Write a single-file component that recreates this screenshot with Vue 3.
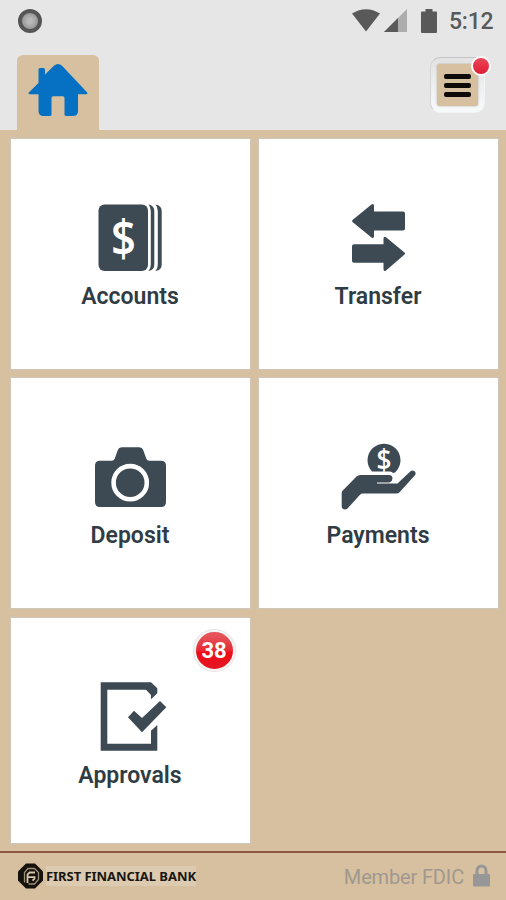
<template>
  <div class="screen">
    <header class="top">
      <div class="status-bar">
        <span class="record"></span>
        <div class="status-icons">
          <svg class="wifi" width="28" height="23" viewBox="0 0 28 23">
            <path d="M0 4.5Q14-4 28 4.5L14 22.5Z" fill="#595959" />
          </svg>
          <svg class="signal" width="23" height="23" viewBox="0 0 23 23">
            <path d="M23 0V23H0Z" fill="#adadad" />
            <path d="M14 9V23H0Z" fill="#595959" />
          </svg>
          <svg class="battery" width="16" height="24" viewBox="0 0 16 24">
            <path d="M4.500 0h7v2.500H15q1 0 1 1V23q0 1-1 1H1q-1 0-1-1V3.500q0-1 1-1h3.500z" fill="#595959" />
          </svg>
          <span class="clock">5:12</span>
        </div>
      </div>

      <div class="nav">
        <div class="home-tab">
          <svg width="60" height="54" viewBox="0 0 60 54">
            <path
              d="M.8 28.500 10.500 19V5.500q0-1.500 1.500-1.500h3.500Q17 4 17 5.500V10.500L26 1.700q4-3.400 8 0L59.200 28.500q.8 1.700-1.200 1.700h-8V47q0 5-5 5h-7q-1.500 0-1.500-1.500V34q0-1.800-1.800-1.800h-9.400q-1.800 0-1.800 1.800v16.500q0 1.500-1.500 1.500H15.500q-5 0-5-5V30.200H2q-2 0-1.200-1.700z"
              fill="#0670c2"
            />
          </svg>
        </div>
        <button class="menu-btn" @click="menuOpen = !menuOpen">
          <span class="menu-face">
            <span class="bar"></span>
            <span class="bar"></span>
            <span class="bar"></span>
          </span>
          <span class="dot"></span>
        </button>
      </div>
    </header>

    <main class="tiles">
      <div v-for="item in items" :key="item.name" class="tile">
        <svg v-if="item.icon === 'accounts'" class="icon" viewBox="0 0 90 80">
          <rect x="13.500" y="6.500" width="49.500" height="66.500" rx="6" />
          <path d="M63.500 6.500q5.800 1 5.800 6.500v53.500q0 5.500-5.800 6.500q2.300-2.500 2.300-6.500V13q0-4-2.300-6.500z" />
          <path d="M70.500 6.500q6.200 1 6.200 6.500v53.500q0 5.500-6.200 6.500q2.300-2.500 2.300-6.500V13q0-4-2.300-6.500z" />
          <text class="dollar" x="38.500" y="58" font-size="51" textLength="25" lengthAdjust="spacingAndGlyphs">$</text>
        </svg>

        <svg v-else-if="item.icon === 'transfer'" class="icon" viewBox="0 0 90 80">
          <path d="M19.500 22 38.500 6.500q2.500-1.500 2.500 1.500v5.500h29q2 0 2 2v15q0 2-2 2H41V38q0 3-2.500 1.500L19.500 24q-1-1 0-2z" />
          <path d="M71.500 54.500 53 39.200q-2.500-1.500-2.500 1.500v5.500H21q-2 0-2 2v14.500q0 2 2 2h29.500V71q0 3 2.500 1.500l18.500-16q1-1 0-2z" />
        </svg>

        <svg v-else-if="item.icon === 'deposit'" class="icon" viewBox="0 0 90 80">
          <path
            d="M15 23.700h11.500q2.500 0 3.300-2.300l3-8.400q1-2.700 4-2.700h17.400q3 0 4 2.700l3 8.400q.8 2.300 3.300 2.300H76q5 0 5 5V65q0 5-5 5H15q-5 0-5-5V28.700q0-5 5-5z"
          />
          <circle cx="45.200" cy="45.700" r="16.600" fill="none" stroke="#fff" stroke-width="4.600" />
        </svg>

        <svg v-else-if="item.icon === 'payments'" class="icon" viewBox="0 0 90 80">
          <path d="M39 34.500A16.500 16.500 0 1 1 62 35.500L60 36q-1-1.500-3-1.500z" />
          <text class="dollar" x="51" y="33" font-size="28" textLength="15" lengthAdjust="spacingAndGlyphs">$</text>
          <path
            d="M9.300 54 23.500 39.500Q25 38 27.500 38H56q3.500 0 3.500 3.500 0 2.700-3 4H44v1h20.500L77.500 34.300q2-1.500 4 0 2 2 .4 4L66.800 55q-1.300 1.500-3.500 1.500H30q-1.800 0-3 1.300L14.500 71.500q-2.500 2-5 0-.8-1-.8-2.500V56q0-1 .6-2z"
          />
        </svg>

        <svg v-else class="icon" viewBox="0 0 90 80">
          <path
            d="M15.700 5.300H66l6.300 6v5L66 22.300V18l-5-5.300H22.300v54H66v-13l6.300-5.700v25.700H15.700z"
          />
          <path d="M43 40.300 49 33.700 57 41 75 24l6.300 6.300L57 55.300z" />
        </svg>

        <span class="label">{{ item.name }}</span>
        <span v-if="item.count" class="badge">{{ item.count }}</span>
      </div>
    </main>

    <footer class="footer">
      <div class="brand">
        <svg width="25" height="26" viewBox="0 0 25 26">
          <path d="M8 .5h9l8 8v9l-8 8H8l-8-8v-9z" fill="#15110d" />
          <path d="M6.500 19.500V9.500L10 5.500h6.500l4 4v7l-4 4.500H10.500" fill="none" stroke="#9c8e79" stroke-width="1.300" />
          <path d="M9.500 20v-8.500l2-2H17M10 14.200h6.500v1.500l-2 2" fill="none" stroke="#d7c7ac" stroke-width="1.800" />
        </svg>
        <span class="brand-name">FIRST FINANCIAL BANK</span>
      </div>
      <div class="fdic">
        <span class="member">Member FDIC</span>
        <svg width="17" height="23" viewBox="0 0 17 23">
          <path d="M4 11V6.500a4.500 4.500 0 0 1 9 0V11" fill="none" stroke="#979797" stroke-width="3" />
          <rect y="10" width="17" height="12.500" rx="1" fill="#979797" />
        </svg>
      </div>
    </footer>
  </div>
</template>

<script setup>
import { ref } from 'vue';

const menuOpen = ref(false);

const items = [
  { name: 'Accounts', icon: 'accounts' },
  { name: 'Transfer', icon: 'transfer' },
  { name: 'Deposit', icon: 'deposit' },
  { name: 'Payments', icon: 'payments' },
  { name: 'Approvals', icon: 'approvals', count: 38 },
];
</script>

<style>
body {
  margin: 0;
  background: #d6c09f;
}
</style>

<style scoped>
.screen {
  display: flex;
  flex-direction: column;
  width: 506px;
  height: 900px;
  overflow: hidden;
  background: #d6c09f;
  font-family: Roboto, "Liberation Sans", sans-serif;
}

.top {
  height: 130px;
  background: #e6e6e6;
}

.status-bar {
  display: flex;
  justify-content: space-between;
  align-items: center;
  box-sizing: border-box;
  height: 41px;
  padding: 0 13px 0 18px;
}

.record {
  box-sizing: border-box;
  width: 24px;
  height: 24px;
  border: 4px solid #555;
  border-radius: 50%;
  background: radial-gradient(circle, #b8b8b8 20%, #989898 70%);
}

.status-icons {
  display: flex;
  align-items: center;
}

.signal {
  margin-left: 4px;
}

.battery {
  margin: 0 12px 0 14px;
}

.clock {
  width: 45px;
  margin-right: -1px;
  padding-top: 2px;
  color: #595959;
  font-size: 23px;
  font-weight: 500;
  letter-spacing: -0.2px;
  line-height: 24px;
  white-space: nowrap;
}

.nav {
  display: flex;
  justify-content: space-between;
  align-items: flex-start;
  padding: 14px 21px 0 17px;
}

.home-tab {
  display: flex;
  justify-content: center;
  box-sizing: border-box;
  width: 82px;
  height: 75px;
  padding-top: 9px;
  border-radius: 6px 6px 0 0;
  background: #d6c09f;
}

.menu-btn {
  position: relative;
  box-sizing: border-box;
  width: 55px;
  height: 56px;
  margin-top: 2px;
  padding: 6px;
  border: 1px solid #f1f3f4;
  border-top-color: #c4c4c4;
  border-left-color: #d5d5d5;
  border-radius: 10px;
  background: linear-gradient(#e2e2e2, #f7fafb);
}

.menu-face {
  display: flex;
  flex-direction: column;
  align-items: center;
  justify-content: center;
  gap: 4px;
  width: 41px;
  height: 42px;
  padding-top: 1px;
  box-sizing: border-box;
  border-radius: 3px;
  background: #d6c09f;
  box-shadow: 0 0 2px #b0a594;
}

.bar {
  width: 27px;
  height: 4.700px;
  border-radius: 2px;
  background: #0d0a08;
}

.dot {
  position: absolute;
  top: -2px;
  right: -7px;
  width: 16px;
  height: 16px;
  border: 2px solid #fafafa;
  border-radius: 50%;
  background: linear-gradient(#ee4658, #dc1e36);
}

.tiles {
  display: grid;
  grid-template-columns: 239px 239px;
  grid-template-rows: 230px 230px 225px;
  gap: 9.500px 9px;
  height: 721px;
  box-sizing: border-box;
  padding: 8.500px 0 0 10.500px;
}

.tile {
  position: relative;
  display: flex;
  flex-direction: column;
  align-items: center;
  padding-top: 59px;
  background: #fff;
  box-shadow: 0 0 1px 1px #cfc6b8;
}

.icon {
  width: 90px;
  height: 80px;
  margin-left: -1px;
  fill: #3d4a53;
}

.dollar {
  fill: #fff;
  font-family: "Open Sans", sans-serif;
  font-weight: 600;
  text-anchor: middle;
}

.label {
  margin-top: 6px;
  color: #303c44;
  font-size: 23px;
  font-weight: 600;
  line-height: 26px;
}

.badge {
  position: absolute;
  top: 12px;
  right: 15px;
  box-sizing: border-box;
  width: 41px;
  height: 41px;
  border: 2px solid #f6f3f3;
  border-radius: 50%;
  background: linear-gradient(#e5535b 10%, #e52a35 50%, #ee0c18 55%, #e31724);
  box-shadow: 0 0 1px 1px #e0e0e0;
  color: #fff;
  font-size: 22px;
  font-weight: 700;
  line-height: 37px;
  text-align: center;
}

.footer {
  display: flex;
  justify-content: space-between;
  align-items: center;
  flex: 1;
  padding: 0 16px 2px 18px;
  border-top: 2px solid #8b5940;
}

.brand {
  display: flex;
  align-items: center;
  gap: 3px;
}

.brand-name {
  background: #dccbb0;
  color: #1a1510;
  font-family: "Noto Sans", sans-serif;
  font-size: 13px;
  font-weight: 700;
  letter-spacing: -0.05px;
  line-height: 20px;
  white-space: nowrap;
}

.fdic {
  display: flex;
  align-items: center;
  gap: 9px;
  color: #a0988e;
  font-size: 20px;
  letter-spacing: -0.15px;
}

.member {
  padding-top: 2px;
}
</style>
